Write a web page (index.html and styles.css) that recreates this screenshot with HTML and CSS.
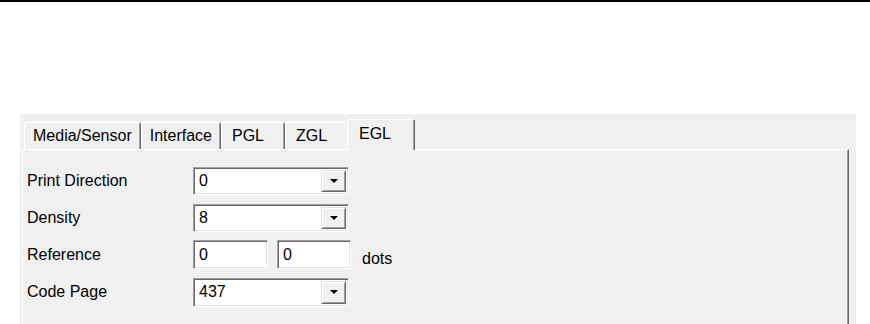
FILE: index.html
```html
<!DOCTYPE html>
<html>
<head>
<meta charset="utf-8">
<link rel="stylesheet" href="styles.css">
</head>
<body>
<div class="topbar"></div>
<div class="dialog">
  <div class="tabs">
    <div class="tab">Media/Sensor</div>
    <div class="tab">Interface</div>
    <div class="tab tab-min">PGL</div>
    <div class="tab tab-min">ZGL</div>
    <div class="tab tab-min tab-active">EGL</div>
  </div>
  <div class="panel">
    <div class="row">
      <span class="label">Print Direction</span>
      <div class="select"><span class="value">0</span><span class="btn"><svg width="8" height="4" viewBox="0 0 8 4"><polygon points="0,0 8,0 4,4" fill="#000"/></svg></span></div>
    </div>
    <div class="row">
      <span class="label">Density</span>
      <div class="select"><span class="value">8</span><span class="btn"><svg width="8" height="4" viewBox="0 0 8 4"><polygon points="0,0 8,0 4,4" fill="#000"/></svg></span></div>
    </div>
    <div class="row row-tall">
      <span class="label">Reference</span>
      <div class="input">0</div>
      <div class="input input-second">0</div>
      <span class="unit">dots</span>
    </div>
    <div class="row row-tall">
      <span class="label">Code Page</span>
      <div class="select"><span class="value">437</span><span class="btn"><svg width="8" height="4" viewBox="0 0 8 4"><polygon points="0,0 8,0 4,4" fill="#000"/></svg></span></div>
    </div>
  </div>
</div>
</body>
</html>
```

FILE: styles.css
```css
html, body {
  margin: 0;
  padding: 0;
  background: #ffffff;
}
body {
  font-family: "Liberation Sans", Arial, sans-serif;
  font-size: 16px;
  color: #000;
  overflow: hidden;
}
.topbar {
  height: 2px;
  background: #000;
}
.dialog {
  margin: 112px 0 0 20px;
  width: 836px;
  height: 210px;
  box-sizing: border-box;
  background: #f0f0f0;
  padding: 5px 7px 0 2px;
  display: flex;
  flex-direction: column;
  overflow: hidden;
}
.tabs {
  display: flex;
  align-items: flex-end;
  height: 30px;
  padding-left: 2px;
  flex-shrink: 0;
}
.tab {
  height: 27px;
  box-sizing: border-box;
  border-top: 1px solid #ffffff;
  border-left: 1px solid #ffffff;
  border-right: 1px solid #696969;
  box-shadow: inset -1px 0 #a0a0a0;
  border-radius: 2px 2px 0 0;
  padding: 0 8px 0 8px;
  line-height: 25px;
  white-space: nowrap;
  background: #f0f0f0;
}
.tab-min {
  min-width: 64px;
  padding-left: 10px;
}
.tab-active {
  height: 31px;
  min-width: 68px;
  margin: 0 -2px -1px -2px;
  padding-left: 11px;
  line-height: 27px;
  position: relative;
  z-index: 1;
}
.panel {
  flex: 1;
  box-sizing: border-box;
  border-top: 1px solid #ffffff;
  border-left: 1px solid #ffffff;
  border-right: 1px solid #696969;
  box-shadow: inset -1px 0 #a0a0a0;
  padding: 17px 0 0 4px;
  display: flex;
  flex-direction: column;
  gap: 8.5px;
}
.row {
  display: flex;
  align-items: center;
  height: 28px;
}
.row-tall {
  height: 29px;
}
.label {
  width: 166px;
  flex-shrink: 0;
}
.select, .input {
  box-sizing: border-box;
  height: 100%;
  background: #fff;
  border-style: solid;
  border-width: 1px;
  border-color: #a0a0a0 #ffffff #ffffff #a0a0a0;
  box-shadow: inset 1px 1px 0 #696969, inset -1px -1px 0 #e3e3e3;
  display: flex;
  align-items: center;
  padding: 2px 2px 2px 5px;
}
.select {
  width: 156px;
}
.value {
  flex: 1;
}
.btn {
  width: 25px;
  height: 100%;
  box-sizing: border-box;
  background: #f0f0f0;
  border-style: solid;
  border-width: 1px;
  border-color: #e3e3e3 #696969 #696969 #e3e3e3;
  box-shadow: inset 1px 1px 0 #ffffff, inset -1px -1px 0 #a0a0a0;
  display: flex;
  align-items: center;
  justify-content: center;
}
.btn svg {
  display: block;
}
.input {
  width: 75px;
}
.input-second {
  width: 74px;
  margin-left: 9px;
}
.unit {
  align-self: flex-end;
  line-height: 20px;
  margin-left: 11px;
}
```
